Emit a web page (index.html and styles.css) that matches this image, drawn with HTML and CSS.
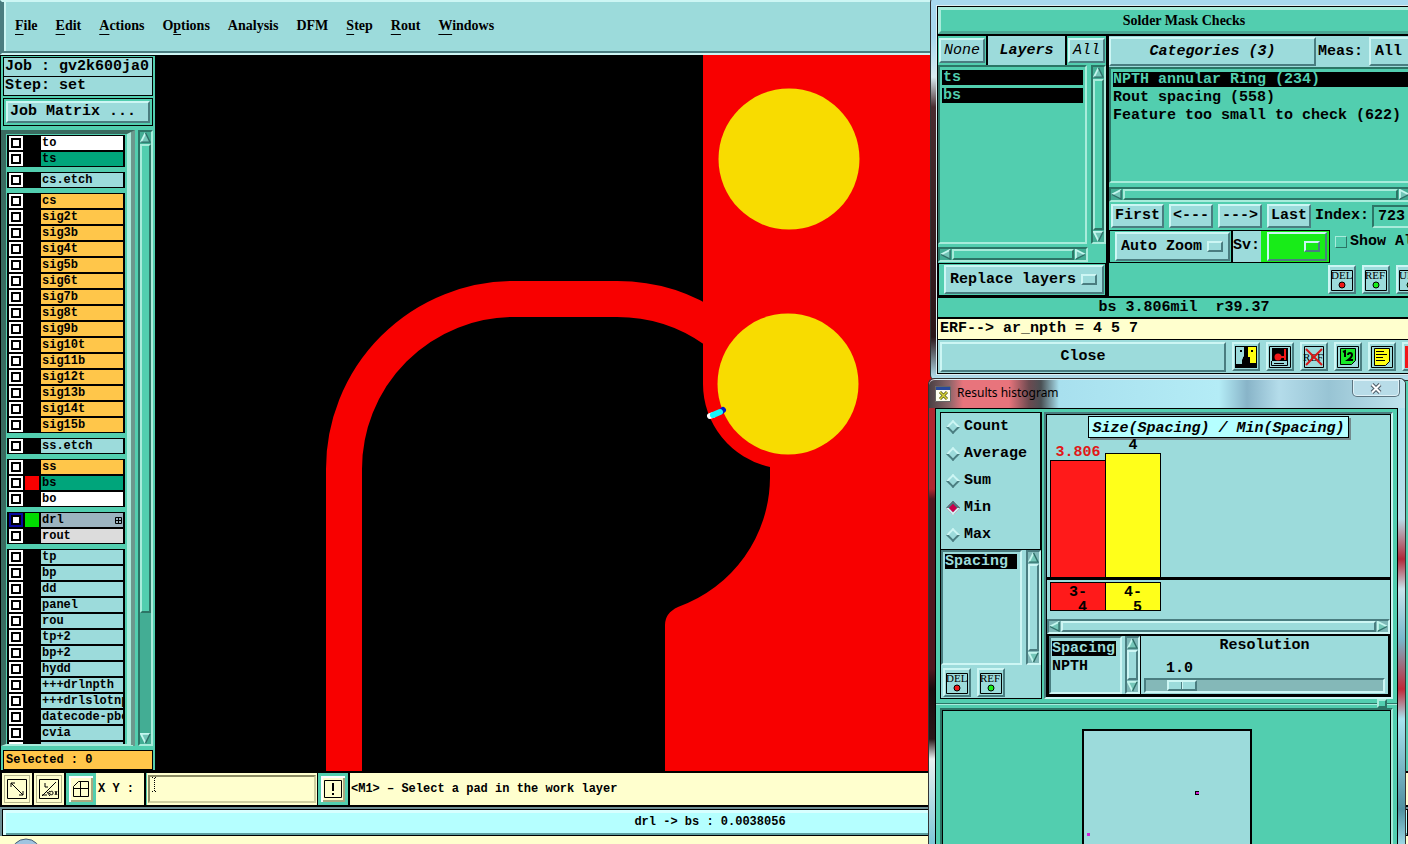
FILE: index.html
```html
<!DOCTYPE html>
<html lang="en">
<head>
<meta charset="utf-8">
<title>Graphic Editor</title>
<link rel="stylesheet" href="styles.css">
</head>
<body>
<svg class="defs" width="0" height="0" aria-hidden="true">
  <symbol id="up" viewBox="0 0 12 12"><path d="M6 1 1 11H11Z" fill="#74c6b8"/><path d="M1 11 6 1" stroke="#c4f6ee" stroke-width="2"/><path d="M6 1 11 11H1" fill="none" stroke="#2f6f68" stroke-width="1.5"/></symbol>
  <symbol id="down" viewBox="0 0 12 12"><path d="M6 11 1 1H11Z" fill="#74c6b8"/><path d="M6 11 1 1H11" fill="none" stroke="#c4f6ee" stroke-width="2"/><path d="M11 1 6 11" stroke="#2f6f68" stroke-width="1.5"/></symbol>
  <symbol id="left" viewBox="0 0 12 12"><path d="M1 6 11 1V11Z" fill="#74c6b8"/><path d="M1 6 11 1" stroke="#c4f6ee" stroke-width="2"/><path d="M11 1V11L1 6" fill="none" stroke="#2f6f68" stroke-width="1.5"/></symbol>
  <symbol id="right" viewBox="0 0 12 12"><path d="M11 6 1 1V11Z" fill="#74c6b8"/><path d="M1 11V1L11 6" fill="none" stroke="#c4f6ee" stroke-width="2"/><path d="M1 11 11 6" stroke="#2f6f68" stroke-width="1.5"/></symbol>
</svg>

<main class="app">
  <nav class="menubar">
    <button><u>F</u>ile</button><button><u>E</u>dit</button><button><u>A</u>ctions</button><button>O<u>p</u>tions</button><button>Analysis</button><button>DFM</button><button><u>S</u>tep</button><button><u>R</u>out</button><button><u>W</u>indows</button>
  </nav>
  <div class="work">
    <aside class="sidebar">
      <div class="info">
        <div>Job : gv2k600ja0</div>
        <div>Step: set</div>
      </div>
      <div class="matrix"><button class="btn">Job Matrix ...</button></div>
      <div class="layer-area">
        <div class="layers">
          <div class="group">
            <label class="white"><input type="checkbox"><i></i><span>to</span></label>
            <label class="mask"><input type="checkbox"><i></i><span>ts</span></label>
          </div>
          <div class="group">
            <label><input type="checkbox"><i></i><span>cs.etch</span></label>
          </div>
          <div class="group signal">
            <label><input type="checkbox"><i></i><span>cs</span></label>
            <label><input type="checkbox"><i></i><span>sig2t</span></label>
            <label><input type="checkbox"><i></i><span>sig3b</span></label>
            <label><input type="checkbox"><i></i><span>sig4t</span></label>
            <label><input type="checkbox"><i></i><span>sig5b</span></label>
            <label><input type="checkbox"><i></i><span>sig6t</span></label>
            <label><input type="checkbox"><i></i><span>sig7b</span></label>
            <label><input type="checkbox"><i></i><span>sig8t</span></label>
            <label><input type="checkbox"><i></i><span>sig9b</span></label>
            <label><input type="checkbox"><i></i><span>sig10t</span></label>
            <label><input type="checkbox"><i></i><span>sig11b</span></label>
            <label><input type="checkbox"><i></i><span>sig12t</span></label>
            <label><input type="checkbox"><i></i><span>sig13b</span></label>
            <label><input type="checkbox"><i></i><span>sig14t</span></label>
            <label><input type="checkbox"><i></i><span>sig15b</span></label>
          </div>
          <div class="group">
            <label><input type="checkbox"><i></i><span>ss.etch</span></label>
          </div>
          <div class="group">
            <label class="sig"><input type="checkbox"><i></i><span>ss</span></label>
            <label class="mask"><input type="checkbox"><i class="red"></i><span>bs</span></label>
            <label class="white"><input type="checkbox"><i></i><span>bo</span></label>
          </div>
          <div class="group">
            <label class="drill"><input type="checkbox" checked><i class="green"></i><span>drl<svg width="7" height="7"><path d="M.5.5h6v6h-6zM3.500 0v7M0 3.500h7" fill="none" stroke="#000"/></svg></span></label>
            <label class="rout"><input type="checkbox"><i></i><span>rout</span></label>
          </div>
          <div class="group">
            <label><input type="checkbox"><i></i><span>tp</span></label>
            <label><input type="checkbox"><i></i><span>bp</span></label>
            <label><input type="checkbox"><i></i><span>dd</span></label>
            <label><input type="checkbox"><i></i><span>panel</span></label>
            <label><input type="checkbox"><i></i><span>rou</span></label>
            <label><input type="checkbox"><i></i><span>tp+2</span></label>
            <label><input type="checkbox"><i></i><span>bp+2</span></label>
            <label><input type="checkbox"><i></i><span>hydd</span></label>
            <label><input type="checkbox"><i></i><span>+++drlnpth</span></label>
            <label><input type="checkbox"><i></i><span>+++drlslotnpth</span></label>
            <label><input type="checkbox"><i></i><span>datecode-pbot</span></label>
            <label><input type="checkbox"><i></i><span>cvia</span></label>
            <label><input type="checkbox"><i></i><span></span></label>
          </div>
        </div>
        <div class="vscroll g part"><svg><use href="#up"/></svg><b></b><svg><use href="#down"/></svg></div>
      </div>
      <div class="selected">Selected : 0</div>
    </aside>
    <section class="canvas">
      <svg width="100%" height="100%" aria-label="Board view">
        <g transform="translate(-155 -55)">
          <path d="M703 55H1600V1200H665V625Q665 613 678 607A138 138 0 0 0 770 478V467A85 85 0 0 1 703 384Z" fill="#f80000"/>
          <path d="M344 1200V469A170 170 0 0 1 514 299H617A170 170 0 0 1 715 330" fill="none" stroke="#f80000" stroke-width="36"/>
          <circle cx="789" cy="159" r="70.5" fill="#f8dc00"/>
          <circle cx="788" cy="384" r="70.5" fill="#f8dc00"/>
          <g stroke-width="6" stroke-linecap="round"><path d="M710 416 713 415" stroke="#fff"/><path d="M722 411 723 410" stroke="#0018c8"/><path d="M713 415 720 412" stroke="#18f4f8"/></g>
        </g>
      </svg>
    </section>
  </div>
  <div class="toolbar">
    <button class="tool" aria-label="Zoom extents"><svg width="20" height="20"><path d="M.5.5h19v19H.5zM4 4l12 12M4 8V4h4M16 12v4h-4" fill="none" stroke="#000"/></svg></button>
    <button class="tool" aria-label="Angle"><svg width="20" height="20"><path d="M.5.5h19v19H.5zM3 17 17 3M3 16h5M6 4v4h3M11 13q3-2 3 1t-3 1 0-3M16 12l2 4m0-4-2 4M8 13l3 4" fill="none" stroke="#000"/></svg></button>
    <button class="tool on" aria-label="Grid"><svg width="18" height="18"><path d="M1.500 6.500 6.500 1.500h10v15h-15zM8.500 1v16M1 8.500h16" fill="none" stroke="#000"/></svg></button>
    <label class="xy" for="xy">X Y :</label>
    <div class="coord"><input id="xy" type="text"><svg class="caret" width="5" height="16"><path d="M0 .5h1m2 0h1M0 14.500h1m2 0h1" stroke="#000"/><path d="M2.500 1v13" stroke="#000" stroke-dasharray="1 1"/></svg></div>
    <button class="tool on alert" aria-label="Messages"><svg width="18" height="18"><path d="M.5.5h17v17H.5z" fill="none" stroke="#000"/><path d="M9 3v8M9 13v2" stroke="#000" stroke-width="2"/></svg></button>
    <output class="message">&lt;M1&gt; – Select a pad in the work layer</output>
  </div>
  <div class="measure"><div>drl -&gt; bs : 0.0038056</div></div>
  <footer class="taskbar"><svg width="32" height="8"><circle cx="15" cy="18" r="15" fill="#9fc4e0" stroke="#465a72"/></svg></footer>
</main>

<section class="window checks">
  <div class="panel">
    <h1 class="title">Solder Mask Checks</h1>
    <div class="columns">
      <div class="layer-col">
        <div class="heads"><div class="hcell"><button class="btn plain">None</button></div><h2>Layers</h2><div class="hcell"><button class="btn plain">All</button></div></div>
        <div class="listrow">
          <ul class="list g"><li class="sel">ts</li><li class="sel">bs</li></ul>
          <div class="vscroll g"><svg><use href="#up"/></svg><b></b><svg><use href="#down"/></svg></div>
        </div>
        <div class="hscroll g"><svg><use href="#left"/></svg><b></b><svg><use href="#right"/></svg></div>
        <div class="replace"><div class="option"><select aria-label="Layer action"><option>Replace layers</option></select></div></div>
      </div>
      <div class="cat-col">
        <div class="cat-head"><button class="btn cat">Categories (3)</button><label for="meas">Meas:</label><select id="meas" class="btn"><option>All</option></select></div>
        <div class="catlist">
          <ul class="list g"><li class="sel">NPTH annular Ring (234)</li><li>Rout spacing (558)</li><li>Feature too small to check (622)</li></ul>
          <div class="hscroll g"><svg><use href="#left"/></svg><b></b><svg><use href="#right"/></svg></div>
        </div>
        <div class="step-row"><button class="btn">First</button><button class="btn">&lt;---</button><button class="btn">---&gt;</button><button class="btn">Last</button><label for="index">Index:</label><input id="index" type="text" value="723"></div>
        <div class="zoom-row">
          <div class="zoomcell"><div class="option"><select aria-label="Zoom mode"><option>Auto Zoom</option></select></div></div>
          <label class="sv" for="sv">Sv:</label>
          <div class="svcell"><div class="option lime"><select id="sv"><option></option></select></div></div>
          <label class="showall"><input type="checkbox">Show All</label>
        </div>
        <div class="icon-row">
          <button class="btn icon" aria-label="Delete"><svg width="24" height="24"><path d="M1.500 2.500h21v20h-21z" fill="none" stroke="#000"/><text x="1" y="11">DEL</text><circle cx="12" cy="17" r="3" fill="#f01818" stroke="#000"/></svg></button>
          <button class="btn icon" aria-label="Reference"><svg width="24" height="24"><path d="M1.500 2.500h21v20h-21z" fill="none" stroke="#000"/><text x="1" y="11">REF</text><circle cx="12" cy="17" r="3" fill="#18f018" stroke="#000"/></svg></button>
          <button class="btn icon" aria-label="Update"><svg width="24" height="24"><path d="M1.500 2.500h21v20h-21z" fill="none" stroke="#000"/><text x="1" y="11">UPD</text><circle cx="12" cy="17" r="3" fill="#18f018" stroke="#000"/></svg></button>
        </div>
      </div>
    </div>
    <div class="result">bs 3.806mil&nbsp; r39.37</div>
    <div class="erf">ERF--&gt; ar_npth = 4 5 7</div>
    <div class="actions">
      <button class="btn close">Close</button>
      <button class="btn icon" aria-label="Compare"><svg width="22" height="22"><path d="M0 0h22v22H0z"/><path d="M1 1h8v9l-2 4v4H1z" fill="#9cdbdb"/><path d="M13 1h8v16h-6v-4l-2-2z" fill="#ff1"/><path d="M6 4v2M17 4v2M8 12h2M13 12h2" stroke="#000" stroke-width="2"/></svg></button>
      <button class="btn icon" aria-label="Histogram"><svg width="22" height="22"><path d="M.5.5h21v21H.5z" fill="#9cdbdb" stroke="#000"/><path d="M3 2h16v13H3z"/><circle cx="9" cy="11" r="3.500" fill="#f01818"/><path d="M11 11h5M16 3v11" stroke="#f01818" stroke-width="2"/><path d="M2.500 15v4.500h16V15M5 17.500h10" fill="none" stroke="#000"/></svg></button>
      <button class="btn icon" aria-label="Clear reference"><svg width="22" height="22"><path d="M1.500.5h19v21h-19z" fill="none" stroke="#000"/><text x="0" y="15">REF</text><path d="M3 3 19 19M19 3 3 19" stroke="#d81818" stroke-width="2"/></svg></button>
      <button class="btn icon" aria-label="Number report"><svg width="22" height="22"><path d="M.5.5h21v21H.5z" fill="none" stroke="#000"/><path d="M3.500 2.500h15v12l-4 4h-11z" fill="#18e828" stroke="#000"/><path d="M6 6l2-1v6M11 9q0-2 2-2t2 2-4 5h5" fill="none" stroke="#000" stroke-width="2"/></svg></button>
      <button class="btn icon" aria-label="Text report"><svg width="22" height="22"><path d="M.5.5h21v21H.5z" fill="none" stroke="#000"/><path d="M3.500 2.500h15v13l-4 4h-11z" fill="#ff1" stroke="#000"/><path d="M5 5.500h8M5 8.500h11M5 11.500h7M5 14.500h9" stroke="#000"/></svg></button>
      <button class="btn icon" aria-label="Stop"><svg width="22" height="22"><path d="M1.500 1.500h19v19h-19z" fill="#9cdbdb" stroke="#f01818" stroke-width="3"/><path d="M4 19V9h3v10" fill="none" stroke="#000"/></svg></button>
    </div>
  </div>
</section>

<section class="window histogram">
  <header>
    <svg width="16" height="16"><path d="M.5.5h15v15H.5z" fill="#fffff0" stroke="#666"/><path d="M1 1h14v3H1z" fill="#28489c"/><path d="M5 6l7 7M12 6l-7 7" stroke="#54541c" stroke-width="3"/><path d="M5 6l7 7M12 6l-7 7" stroke="#d8d438" stroke-width="1.500"/></svg>
    <span>Results histogram</span>
    <button aria-label="Close window"><svg width="12" height="11"><path d="M2 1.500l8 8M10 1.500l-8 8" stroke="#4c5a66" stroke-width="4"/><path d="M2 1.500l8 8M10 1.500l-8 8" stroke="#fff" stroke-width="2"/></svg></button>
  </header>
  <div class="hbody">
    <div class="upper">
      <div class="stat-col">
        <div class="radios">
          <label><input type="radio" name="stat">Count</label>
          <label><input type="radio" name="stat">Average</label>
          <label><input type="radio" name="stat">Sum</label>
          <label><input type="radio" name="stat" checked>Min</label>
          <label><input type="radio" name="stat">Max</label>
        </div>
        <div class="listrow">
          <ul class="list"><li class="sel">Spacing</li></ul>
          <div class="vscroll"><svg><use href="#up"/></svg><b></b><svg><use href="#down"/></svg></div>
        </div>
        <div class="icon-row">
          <button class="btn icon" aria-label="Delete result"><svg width="24" height="24"><path d="M1.500 2.500h21v20h-21z" fill="none" stroke="#000"/><text x="1" y="11">DEL</text><circle cx="12" cy="17" r="3" fill="#f01818" stroke="#000"/></svg></button>
          <button class="btn icon" aria-label="Reference result"><svg width="24" height="24"><path d="M1.500 2.500h21v20h-21z" fill="none" stroke="#000"/><text x="1" y="11">REF</text><circle cx="12" cy="17" r="3" fill="#18f018" stroke="#000"/></svg></button>
        </div>
      </div>
      <div class="chart-col">
        <h2>Size(Spacing) / Min(Spacing)</h2>
        <div class="plot">
          <div class="bar" style="height:117px"><span class="hot">3.806</span></div>
          <div class="bar y" style="height:124px"><span>4</span></div>
        </div>
        <div class="axis"><div class="tick">3-<br>&nbsp;4</div><div class="tick y">4-<br>&nbsp;5</div></div>
        <div class="hscroll"><svg><use href="#left"/></svg><b></b><svg><use href="#right"/></svg></div>
        <div class="reso">
          <ul class="list"><li class="sel">Spacing</li><li>NPTH</li></ul>
          <div class="vscroll"><svg><use href="#up"/></svg><b></b><svg><use href="#down"/></svg></div>
          <div class="slider"><label for="res">Resolution</label><output for="res">1.0</output><input id="res" type="range" min="0" max="10" value="1"></div>
        </div>
      </div>
    </div>
    <div class="sash"><i></i></div>
    <div class="map"><svg width="170" height="100%"><path d="M1 1h168v168H1z" fill="#9cdbdb" stroke="#000" stroke-width="2"/><path d="M113 62h4v4h-4z"/><path d="M114 63h3v2h-3zM5 104h3v3H5z" fill="#d020d8"/></svg></div>
  </div>
</section>
</body>
</html>
```
FILE: styles.css
```css
:root {
  --teal: #9cdbdb;
  --green: #52ceaf;
  --cream: #ffffce;
  --lite: #cdf6f4;
  --dark: #4a7d80;
  --glite: #a8ecdb;
  --gdark: #2c7566;
}
* { box-sizing: border-box; }
body {
  margin: 0;
  height: 100vh;
  overflow: hidden;
  position: relative;
  background: #000;
  color: #000;
  font: bold 15px/18px "Liberation Mono", monospace;
}
button, input, select { font: inherit; color: inherit; margin: 0; border-radius: 0; }
h1, h2, ul { margin: 0; padding: 0; list-style: none; }
button { cursor: pointer; white-space: nowrap; }
.defs { position: absolute; }
.btn {
  background: var(--teal);
  border: 2px solid;
  border-color: var(--lite) var(--dark) var(--dark) var(--lite);
  padding: 0 2px;
}

/* main application */
.app { height: 100vh; display: flex; flex-direction: column; background: var(--teal); }
.menubar {
  flex: none;
  height: 55px;
  display: flex;
  align-items: center;
  gap: 18px;
  padding: 0 13px 4px;
  background: var(--teal);
  border: 2px solid;
  border-color: var(--lite) var(--teal) var(--lite) var(--dark);
  box-shadow: inset 2px -2px var(--dark), inset 4px 0 var(--lite);
}
.menubar button { background: none; border: 0; padding: 0; font: bold 14px/20px "Liberation Serif", serif; text-underline-offset: 4px; }
.work { flex: 1; min-height: 0; display: flex; background: #000; }
.sidebar {
  flex: none;
  width: 155px;
  padding: 1px 2px 0 2px;
  border: 1px solid #000;
  border-right: 0;
  background: var(--green);
  display: flex;
  flex-direction: column;
}
.info div { height: 20px; border: 1px solid #000; background: var(--teal); padding: 0 1px; white-space: nowrap; overflow: hidden; }
.info div + div { margin-top: -1px; }
.matrix { margin-top: 2px; border: 1px solid #000; padding: 2px; display: flex; }
.matrix .btn { flex: 1; text-align: left; height: 22px; line-height: 16px; }
.layer-area { flex: 1; min-height: 0; display: flex; gap: 3px; margin: 4px 0 4px -2px; }
.layers {
  flex: 1;
  min-width: 0;
  overflow: hidden;
  display: flex;
  flex-direction: column;
  gap: 5px;
  padding: 1px 2px 0 1px;
  border: solid;
  border-width: 4px 8px 2px 5px;
  border-color: #3a6b60 var(--glite) var(--glite) #3a6b60;
  border-right-style: ridge;
}
.group { flex: none; background: #000; padding: 0 2px; }
.group label { display: flex; height: 16px; align-items: center; font-size: 12px; line-height: 14px; }
.group input { appearance: none; flex: none; width: 14px; height: 14px; background: #fff; border: 2px solid #fff; box-shadow: inset 0 0 0 2px #000; }
.group input:checked { border-color: #0808a0; }
.group i { flex: none; width: 14px; height: 14px; margin: 0 2px; }
.group i.red { background: #f80000; }
.group i.green { background: #00dc00; }
.group span { flex: 1; min-width: 0; display: flex; justify-content: space-between; align-items: center; height: 14px; overflow: hidden; white-space: nowrap; background: var(--teal); padding: 0 1px; }
.signal span, .sig span { background: #ffc64a; }
.white span { background: #fff; }
.mask span { background: #00a57b; }
.drill span { background: #9cb3bf; }
.rout span { background: #dcdcdc; }
.selected { height: 20px; border: 1px solid #000; background: #ffc64a; padding: 0 2px; font-size: 12px; }
.canvas { flex: 1; min-width: 0; overflow: hidden; border-right: 3px solid var(--green); }
.canvas svg { display: block; }

/* scrollbars */
.vscroll, .hscroll { flex: none; display: flex; background: #7fb8b8; border: 2px solid; border-color: var(--dark) var(--lite) var(--lite) var(--dark); }
.vscroll { width: 15px; flex-direction: column; }
.hscroll { height: 15px; }
.vscroll svg, .hscroll svg { flex: none; width: 11px; height: 11px; }
.vscroll b, .hscroll b { flex: 1; background: var(--teal); border: 2px solid; border-color: var(--lite) var(--dark) var(--dark) var(--lite); margin: 1px 0; }
.hscroll b { margin: 0 1px; }
.g.vscroll, .g.hscroll { background: #43ad94; border-color: var(--gdark) var(--glite) var(--glite) var(--gdark); }
.g b { background: var(--green); border-color: var(--glite) var(--gdark) var(--gdark) var(--glite); }
.part b { margin-bottom: 120px; }

/* bottom strips */
.toolbar { flex: none; display: flex; gap: 2px; height: 36px; padding: 2px 0 2px 2px; background: #000; font-size: 12px; }
.tool { flex: none; width: 30px; padding: 0; display: grid; place-items: center; background: var(--cream); border: 2px solid var(--cream); box-shadow: inset 0 0 0 1px #b5b58c; }
.tool.on { border-width: 3px; border-color: var(--green); box-shadow: inset 2px 2px #fff, inset -2px -2px #a8a880; }
.xy { flex: none; width: 48px; margin-left: -2px; padding: 0 2px; line-height: 33px; background: var(--cream); white-space: nowrap; }
.coord { flex: none; width: 171px; padding: 2px 1px; background: var(--cream); border-left: 1px solid var(--green); display: flex; position: relative; }
.coord input { width: 100%; background: var(--cream); border: 2px solid; border-color: #8c8c64 #cfcfa0 #cfcfa0 #8c8c64; outline: 0; }
.caret { position: absolute; left: 5px; top: 4px; pointer-events: none; }
.alert { margin-left: -1px; }
.message { flex: 1; background: var(--cream); line-height: 33px; padding: 0 1px; white-space: nowrap; }
.measure { flex: none; height: 29px; padding: 2px 0 0 2px; background: #6f8f94; }
.measure div { height: 27px; border: 1px solid #000; background: #b5ffff; box-shadow: inset 0 3px #d8ffff, inset 3px 0 #d8ffff, inset 0 -2px #5a9c9c; font-size: 12px; line-height: 24px; text-align: center; padding-left: 10px; }
.taskbar { flex: none; height: 8px; background: var(--cream); padding-left: 11px; }
.taskbar svg { display: block; }

/* floating windows */
.window { position: absolute; border: 1px solid #333; border-radius: 6px; }
.checks {
  left: 930px;
  top: -4px;
  width: 508px;
  padding: 9px 6px 6px;
  background: linear-gradient(#a8d8ee 0 40px, #d8ecf2 80px, #4a2c30 110px, #2a1618 340px, #b0dcea 380px);
}
.panel { background: #000; border: 1px solid #000; box-shadow: 0 0 0 1px #ddeef2; display: flex; flex-direction: column; gap: 2px; }
.title { height: 27px; background: var(--green); border: 3px solid; border-color: var(--glite) #4aa894 #4aa894 var(--glite); font: bold 14px/21px "Liberation Serif", serif; text-align: center; }
.columns { display: flex; gap: 3px; height: 260px; }
.layer-col { flex: none; width: 168px; display: flex; flex-direction: column; background: var(--green); }
.heads { display: flex; gap: 2px; height: 29px; background: #000; }
.hcell { padding: 2px 1px; background: var(--green); display: flex; }
.heads h2 { flex: 1; background: var(--teal); font: italic bold 15px/30px "Liberation Mono", monospace; text-align: center; }
.plain { font-style: italic; font-weight: normal; padding: 0 3px; }
.listrow { display: flex; gap: 4px; flex: 1; min-height: 0; }
.list { flex: 1; min-width: 0; padding: 2px; background: var(--teal); border: 2px solid; border-color: var(--dark) var(--lite) var(--lite) var(--dark); overflow: hidden; white-space: nowrap; }
.list.g { padding-top: 3px; background: var(--green); border-color: var(--gdark) var(--glite) var(--glite) var(--gdark); }
.list li { height: 15px; line-height: 15px; margin-bottom: 3px; }
.list .sel { background: #000; color: var(--teal); }
.g .sel { color: var(--green); }
.layer-col .list li { padding-left: 1px; }
.layer-col .hscroll { margin: 3px 18px 1px 0; }
.replace { border: 1px solid #000; padding: 1px 1px 1px 5px; }
.option { display: grid; align-items: center; }
.option select { grid-area: 1 / 1; appearance: none; width: 100%; height: 29px; padding: 0 20px 0 4px; background: var(--teal); border: 2px solid; border-color: var(--lite) var(--dark) var(--dark) var(--lite); }
.option::after { content: ""; grid-area: 1 / 1; justify-self: end; width: 12px; height: 7px; margin-right: 7px; pointer-events: none; border: 2px solid; border-color: var(--lite) var(--dark) var(--dark) var(--lite); }
.cat-col { flex: 1; min-width: 0; background: var(--green); display: flex; flex-direction: column; }
.cat-head { flex: none; display: flex; height: 31px; background: var(--teal); line-height: 31px; }
.cat { flex: none; width: 207px; margin: 1px 2px 1px 0; font-style: italic; line-height: 18px; }
#meas { appearance: none; flex: none; margin: 1px 0 1px 6px; width: 60px; padding-left: 4px; line-height: 18px; }
.catlist { flex: none; width: 303px; }
.catlist .list { height: 116px; }
.catlist .hscroll { margin: 4px 0 2px; }
.step-row { display: flex; gap: 5px; align-items: center; padding-left: 2px; height: 24px; }
.step-row .btn { height: 24px; padding: 0 2px; }
.step-row label { margin-right: -2px; }
.step-row input { width: 58px; height: 23px; padding: 0 4px; background: var(--green); border: 2px solid; border-color: var(--gdark) var(--glite) var(--glite) var(--gdark); }
.step-row label { margin-left: -1px; }
.zoom-row { display: flex; height: 33px; margin-top: 2px; align-items: stretch; }
.zoomcell { width: 124px; border: 1px solid #000; border-right-width: 2px; padding: 1px 1px 1px 5px; }
.sv { width: 28px; background: var(--teal); border: solid #000; border-width: 1px 0; line-height: 30px; }
.svcell { width: 69px; padding: 1px 2px 1px 6px; background: #18ec18; border: 1px solid #000; border-left: 0; }
.lime select { background: #18ec18; }
.showall { display: flex; align-items: center; gap: 3px; margin-left: 5px; white-space: nowrap; height: 24px; }
.showall input { appearance: none; width: 12px; height: 12px; border: 1px solid; border-color: var(--glite) var(--gdark) var(--gdark) var(--glite); }
.icon-row { display: flex; gap: 6px; padding: 2px 0 0 219px; }
.icon { flex: none; width: 28px; height: 29px; padding: 0; display: grid; place-items: center; }
.icon svg { display: block; }
.icon text { font: normal 11px "Liberation Serif", serif; }
.result { height: 19px; background: var(--green); line-height: 19px; text-align: center; }
.erf { height: 20px; background: var(--cream); padding: 0 2px; line-height: 19px; }
.actions { display: flex; align-items: center; gap: 6px; height: 33px; margin-top: -1px; padding-left: 2px; background: var(--teal); }
.close { flex: none; width: 286px; height: 30px; }

.histogram {
  left: 928px;
  top: 378px;
  bottom: 0;
  width: 478px;
  padding: 0 7px 0 6px;
  border-bottom: 0;
  border-radius: 6px 6px 0 0;
  display: flex;
  flex-direction: column;
  background: linear-gradient(#b02830 0 110px, #501820 120px 290px, #1a0c0e 310px, #2a181a 360px, #e8f0f0 380px, #7cc8d8) left / 7px 100% no-repeat,
    linear-gradient(#a8e4f0, #b8dce8 140px, #b02838 180px, #c8e4ec 210px, #78b8cc 260px, #c02838 310px, #a8e4f0 340px, #5090a0 430px, #9cd8e4) right / 8px 100% no-repeat, #9cd8e4;
}
.histogram header {
  flex: none;
  display: flex;
  align-items: center;
  height: 29px;
  margin: 0 -7px 0 -6px;
  padding-left: 6px;
  border-radius: 6px 6px 0 0;
  border-top: 1px solid #d8f0f6;
  background: linear-gradient(90deg, #4a4044, #8a6468 20px, #e8747c 34px 80px, #6c4a50 100px, #4a5054 112px, #a8e0ee 130px, #b4ecf6 290px, #88b4c8 318px, #b4dcea 350px, #98c4d4 400px, #c0e4ee);
  font: normal 12px/18px "Noto Sans", sans-serif;
}
.histogram header span { margin-left: 6px; flex: 1; padding-bottom: 3px; }
.histogram header button { align-self: flex-start; width: 48px; height: 17px; margin-right: 5px; padding: 0; display: grid; place-items: center; background: #b8dce8; border: 1px solid #5c7480; border-top: 0; border-radius: 0 0 5px 5px; box-shadow: inset 0 0 0 1px #dff2f8; }
.hbody { flex: 1; min-height: 0; background: var(--green); border: 1px solid #000; border-bottom: 0; padding: 3px 4px 0; display: flex; flex-direction: column; }
.upper { flex: none; display: flex; gap: 2px; height: 287px; }
.stat-col { flex: none; width: 102px; border: 1px solid #000; background: var(--teal); display: flex; flex-direction: column; }
.radios { display: flex; flex-direction: column; height: 137px; border: 1px solid #000; border-width: 0 1px 1px 0; }
.radios label { height: 27px; display: flex; align-items: center; gap: 6px; padding-left: 7px; }
.radios input { appearance: none; width: 10px; height: 10px; transform: rotate(45deg); border: 2px solid; border-color: var(--lite) var(--dark) var(--dark) var(--lite); }
.radios input:checked { background: #c8004c; border-color: var(--dark) var(--lite) var(--lite) var(--dark); }
.stat-col .icon-row { padding: 3px 1px 1px 2px; }
.stat-col .list li { padding-left: 0; }
.stat-col .sel { width: 72px; }
.chart-col { flex: 1; min-width: 0; display: flex; flex-direction: column; background: var(--teal); border: 2px solid; border-color: var(--dark) var(--lite) var(--lite) var(--dark); box-shadow: inset 0 0 0 1px #000; padding: 1px; }
.chart-col h2 { align-self: center; height: 22px; padding: 0 3px; background: #b5ffff; border: 1px solid #000; box-shadow: 2px 2px #73898c; font: italic bold 15px/24px "Liberation Mono", monospace; margin-top: 1px; }
.plot { flex: 1; display: flex; align-items: flex-end; padding-left: 3px; border-bottom: 3px solid #000; }
.bar { width: 56px; background: #ff1a1a; border: 1px solid #000; border-bottom: 0; display: flex; justify-content: center; }
.bar + .bar, .tick + .tick { margin-left: -1px; }
.bar.y, .tick.y { background: #ffff1a; }
.bar span { margin-top: -16px; height: 16px; line-height: 16px; }
.hot { color: #e01818; }
.axis { display: flex; height: 39px; padding: 2px 0 0 3px; }
.tick { width: 56px; height: 29px; background: #ff1a1a; border: 1px solid #000; padding: 2px 0 0 18px; line-height: 15px; white-space: nowrap; }
.reso { display: flex; height: 62px; border: 2px solid #000; }
.reso .list { flex: none; width: 73px; padding: 3px 1px; margin-right: 3px; }
.reso .sel { width: 64px; }
.slider { flex: 1; min-width: 0; border-left: 1px solid #000; padding: 1px 3px 0; display: flex; flex-direction: column; }
.slider label { text-align: center; height: 22px; line-height: 18px; }
.slider output { height: 19px; padding-left: 22px; line-height: 20px; }
.slider input { appearance: none; width: 100%; height: 15px; background: #84b8b8; border: 2px solid; border-color: var(--dark) var(--lite) var(--lite) var(--dark); }
.slider input::-webkit-slider-thumb { appearance: none; width: 30px; height: 11px; border: 2px solid; border-color: var(--lite) var(--dark) var(--dark) var(--lite); background: linear-gradient(90deg, var(--teal) 12px, var(--dark) 12px 13px, var(--lite) 13px 14px, var(--teal) 14px); }
.sash { flex: none; height: 9px; display: flex; align-items: center; background: linear-gradient(var(--green) 4px, var(--gdark) 4px 5px, var(--glite) 5px 6px, var(--green) 6px); justify-content: flex-end; padding-right: 10px; margin: 0 -4px; }
.sash i { width: 10px; height: 9px; background: var(--green); border: 2px solid; border-color: var(--glite) var(--gdark) var(--gdark) var(--glite); }
.map { flex: 1; min-height: 0; overflow: hidden; border: 2px solid; border-bottom: 0; border-color: var(--gdark) var(--glite) var(--glite) var(--gdark); box-shadow: inset 1px 1px #000, inset -1px 0 #000; padding-top: 19px; display: flex; justify-content: center; }
.map svg { display: block; }
```
